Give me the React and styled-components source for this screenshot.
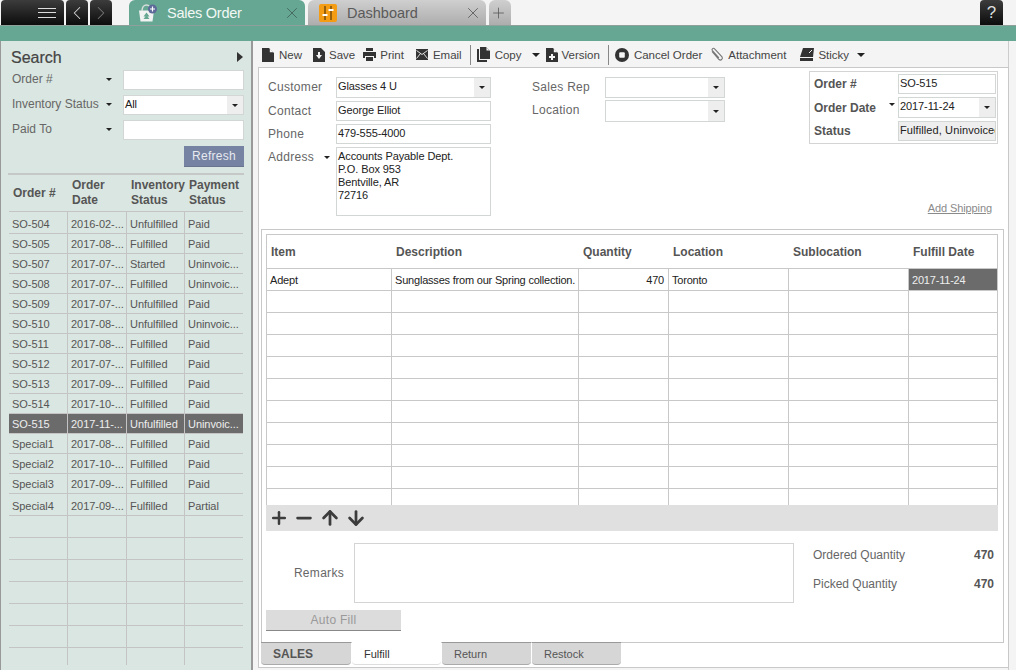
import React from 'react';
import styled, { createGlobalStyle } from 'styled-components';
import { Plus, Minus, ArrowUp, ArrowDown, ChevronLeft, ChevronRight, X } from 'lucide-react';

const GlobalStyle = createGlobalStyle`
  html, body {
    margin: 0;
    padding: 0;
    height: 670px;
    overflow: hidden;
    background: #f4f4f4;
    font-family: "Liberation Sans", Arial, sans-serif;
    color: #555;
  }
  * { box-sizing: border-box; }
`;

const orders = [
  ['SO-504', '2016-02-...', 'Unfulfilled', 'Paid'],
  ['SO-505', '2017-08-...', 'Fulfilled', 'Paid'],
  ['SO-507', '2017-07-...', 'Started', 'Uninvoic...'],
  ['SO-508', '2017-07-...', 'Fulfilled', 'Uninvoic...'],
  ['SO-509', '2017-07-...', 'Unfulfilled', 'Paid'],
  ['SO-510', '2017-08-...', 'Unfulfilled', 'Uninvoic...'],
  ['SO-511', '2017-08-...', 'Fulfilled', 'Paid'],
  ['SO-512', '2017-07-...', 'Fulfilled', 'Paid'],
  ['SO-513', '2017-09-...', 'Fulfilled', 'Paid'],
  ['SO-514', '2017-10-...', 'Fulfilled', 'Paid'],
  ['SO-515', '2017-11-...', 'Unfulfilled', 'Uninvoic...'],
  ['Special1', '2017-08-...', 'Fulfilled', 'Paid'],
  ['Special2', '2017-10-...', 'Fulfilled', 'Paid'],
  ['Special3', '2017-09-...', 'Fulfilled', 'Paid'],
  ['Special4', '2017-09-...', 'Fulfilled', 'Partial'],
];

const Page = styled.div`
  width: 1016px;
  height: 670px;
  display: flex;
  flex-direction: column;
`;

/* top tab strip */
const TopBar = styled.div`
  height: 25px;
  display: flex;
  align-items: flex-end;
  padding-left: 1px;
  background: #f4f4f4;
`;
const DarkBtn = styled.div`
  width: ${(p) => p.$w}px;
  height: 25px;
  margin-right: ${(p) => p.$mr || 2}px;
  border-radius: 4px 4px 0 0;
  background: linear-gradient(#3c3c3c, #0c0c0c);
  color: ${(p) => p.$dim ? '#777' : '#d8d8d8'};
  display: flex;
  align-items: center;
  justify-content: ${(p) => p.$end ? 'flex-end' : 'center'};
  padding-right: ${(p) => p.$end ? 8 : 0}px;
`;
const Burger = styled.span`
  width: 18px;
  height: 10px;
  border-top: 1px solid #ddd;
  border-bottom: 1px solid #ddd;
  position: relative;
  &::after {
    content: '';
    position: absolute;
    left: 0;
    right: 0;
    top: 3px;
    border-top: 1px solid #ddd;
  }
`;
const Tab = styled.div`
  width: ${(p) => p.$w}px;
  height: 25px;
  margin-right: 3px;
  border-radius: 6px 6px 0 0;
  display: flex;
  align-items: center;
  padding: 0 4px 0 ${(p) => p.$pl || 10}px;
  font-size: 14.5px;
  letter-spacing: ${(p) => p.$active ? '-0.25px' : '0'};
  background: ${(p) => p.$active ? '#65a792' : 'linear-gradient(#cfcfcf, #adadad)'};
  color: ${(p) => p.$active ? '#f2f8f5' : '#5a5a5a'};
`;
const TabTitle = styled.span`
  flex: 1;
  margin-left: ${(p) => p.$ml}px;
`;
const HelpBtn = styled.div`
  width: 23px;
  height: 25px;
  margin-left: auto;
  margin-right: 13px;
  border-radius: 4px 4px 0 0;
  background: linear-gradient(#3c3c3c, #0c0c0c);
  color: #ddd;
  font-size: 17px;
  text-align: center;
  line-height: 25px;
`;
const GreenBand = styled.div`
  height: 16px;
  background: #65a792;
  border-top: 1px solid #8f9f99;
`;

/* body */
const Body = styled.div`
  flex: 1;
  display: flex;
  min-height: 0;
`;
const Sidebar = styled.aside`
  width: 253px;
  background: #dae6e1;
  border-left: 1px solid #999;
  border-right: 2px solid #999;
  padding: 5px 7px 0 7px;
  display: flex;
  flex-direction: column;
`;
const SearchHead = styled.div`
  height: 24px;
  display: flex;
  justify-content: space-between;
  align-items: flex-start;
  padding: 3px 1px 0 3px;
  font-size: 16px;
  color: #444;
  -webkit-text-stroke: 0.2px #444;
  svg { margin-top: 3px; }
`;
const FilterRows = styled.div`
  display: grid;
  grid-template-columns: 115px 121px;
  grid-auto-rows: 20px;
  row-gap: 5px;
`;
const FilterLabel = styled.label`
  display: flex;
  justify-content: space-between;
  align-items: center;
  padding: 0 11px 2px 4px;
  font-size: 12px;
  color: #666;
`;
const Caret = styled.span`
  display: inline-block;
  width: 0;
  height: 0;
  border-left: ${(p) => p.$s || 3}px solid transparent;
  border-right: ${(p) => p.$s || 3}px solid transparent;
  border-top: ${(p) => p.$s || 3}px solid #222;
`;
const TextBox = styled.div`
  background: ${(p) => p.$grey ? '#eeeeee' : '#fff'};
  border: 1px solid #d2d6d4;
  font-size: 11px;
  letter-spacing: ${(p) => p.$grey ? '0.1px' : '-0.1px'};
  color: #222;
  padding: ${(p) => p.$pt || 1}px 1px 0 1px;
  white-space: ${(p) => p.$grey ? 'nowrap' : 'pre-line'};
  overflow: hidden;
  height: ${(p) => p.$h ? `${p.$h}px` : 'auto'};
  line-height: ${(p) => p.$lh || 14}px;
`;
const SelectBox = styled.div`
  background: #fff;
  border: 1px solid #d2d6d4;
  font-size: 11px;
  letter-spacing: -0.1px;
  color: #222;
  display: flex;
  height: ${(p) => p.$h ? `${p.$h}px` : 'auto'};
  line-height: 14px;
  padding-left: 1px;
  padding-top: 1px;
`;
const SelectValue = styled.span`
  flex: 1;
`;
const SelectArrow = styled.span`
  width: 16px;
  margin-top: -1px;
  background: #eeeeee;
  display: flex;
  align-items: center;
  justify-content: center;
`;
const RefreshRow = styled.div`
  display: flex;
  justify-content: flex-end;
  margin-top: 6px;
  height: 21px;
`;
const RefreshBtn = styled.button`
  width: 60px;
  border: 0;
  padding: 0;
  border-bottom: 1px solid #69758f;
  background: #7683a3;
  color: #e6e9f0;
  font: 12px "Liberation Sans", Arial, sans-serif;
  letter-spacing: 0.3px;
`;
const Divider = styled.div`
  height: 2px;
  margin-top: 6px;
  background: #c6c8c7;
`;
const OrderGrid = styled.div`
  display: grid;
  grid-template-columns: 59px 59px 58px 58px;
  margin-left: 1px;
`;
const OrderHead = styled.div`
  height: 37px;
  display: flex;
  align-items: center;
  padding-left: 4px;
  font-size: 12px;
  font-weight: bold;
  line-height: 15px;
  color: #555;
  border-bottom: 1px solid #c4c4c4;
`;
const OrderCell = styled.div`
  height: ${(p) => p.$h}px;
  padding-left: 3px;
  font-size: 11px;
  letter-spacing: -0.05px;
  line-height: ${(p) => p.$h === 22 ? 24 : 21}px;
  white-space: nowrap;
  overflow: hidden;
  background: ${(p) => p.$selected ? '#6b6b6b' : 'transparent'};
  color: ${(p) => p.$selected ? '#eee' : '#555'};
  border-bottom: ${(p) => p.$open ? 0 : 1}px solid #c4c4c4;
  border-right: 1px solid #c4c4c4;
  &:nth-child(4n) { border-right: 0; }
`;

/* right side */
const Main = styled.main`
  flex: 1;
  padding: 0 7px 0 5px;
  display: flex;
  flex-direction: column;
  min-width: 0;
`;
const PageEdge = styled.div`
  flex: 1;
  display: flex;
  flex-direction: column;
  border-right: 1px solid #ccc;
  padding-right: 5px;
  min-height: 0;
`;
const Toolbar = styled.div`
  height: 26px;
  display: flex;
  align-items: center;
  font-size: 11.5px;
  color: #444;
  padding: 1px 0 0 4px;
`;
const ToolItem = styled.span`
  display: inline-flex;
  align-items: center;
  gap: ${(p) => p.$gap || 5}px;
  margin-right: ${(p) => p.$mr}px;
  white-space: nowrap;
`;
const ToolSep = styled.span`
  width: 1px;
  height: 20px;
  background: #888;
  margin-right: 6px;
`;
const OuterPanel = styled.div`
  width: 751px;
  height: 601px;
  background: #fff;
  border: 1px solid #c8c8c8;
  display: flex;
  flex-direction: column;
`;
const FormArea = styled.div`
  height: 161px;
  flex-shrink: 0;
  display: flex;
  padding-left: 9px;
`;
const FieldGrid = styled.div`
  display: grid;
  grid-template-columns: ${(p) => p.$cols};
  grid-auto-rows: min-content;
  align-content: start;
  row-gap: ${(p) => p.$gap || 3}px;
  margin-top: 9px;
  margin-left: ${(p) => p.$ml || 0}px;
`;
const FieldLabel = styled.label`
  font-size: 12px;
  letter-spacing: 0.3px;
  color: #666;
  display: flex;
  justify-content: space-between;
  padding: 3px 6px 0 0;
  align-items: flex-start;
`;
const SideCaret = styled.span`
  margin-top: ${(p) => p.$mt || 5}px;
  line-height: 0;
`;
const SummaryColumn = styled.div`
  margin-left: 84px;
  width: 189px;
  display: flex;
  flex-direction: column;
`;
const SummaryBox = styled.div`
  margin-top: 3px;
  height: 73px;
  flex-shrink: 0;
  border: 1px solid #d4d4d4;
  padding: 2px 1px 0 4px;
  display: grid;
  grid-template-columns: 84px 98px;
  grid-template-rows: 20px 21px 20px;
  row-gap: 3px;
`;
const SummaryLabel = styled.label`
  font-size: 12px;
  font-weight: bold;
  color: #555;
  display: flex;
  justify-content: space-between;
  align-items: flex-start;
  padding: ${(p) => p.$pt || 3}px 3px 0 0;
`;
const ShippingLink = styled.a`
  align-self: flex-end;
  margin: 58px 6px 0 0;
  font-size: 11px;
  letter-spacing: -0.1px;
  color: #8a8a8a;
  text-decoration: underline;
`;
const InnerPanel = styled.div`
  width: 743px;
  height: 414px;
  flex-shrink: 0;
  margin-left: 2px;
  border: 1px solid #c8c8c8;
  padding: 4px 5px 0 4px;
`;
const LineGrid = styled.div`
  width: 732px;
  display: grid;
  grid-template-columns: 125px 187px 90px 120px 120px 88px;
  border: 1px solid #c8c8c8;
  border-bottom: 0;
`;
const LineHead = styled.div`
  height: 34px;
  display: flex;
  align-items: center;
  padding-left: 4px;
  font-size: 12px;
  font-weight: bold;
  color: #555;
  border-bottom: 1px solid #c8c8c8;
`;
const LineCell = styled.div`
  height: ${(p) => p.$short ? 16 : 22}px;
  padding: 0 4px 0 3px;
  font-size: 11px;
  line-height: 22px;
  letter-spacing: -0.2px;
  white-space: nowrap;
  overflow: hidden;
  text-align: ${(p) => p.$right ? 'right' : 'left'};
  background: ${(p) => p.$selected ? '#6b6b6b' : '#fff'};
  color: ${(p) => p.$selected ? '#eee' : '#222'};
  border-bottom: ${(p) => p.$short ? 0 : 1}px solid #c8c8c8;
  border-right: 1px solid #c8c8c8;
  &:nth-child(6n) { border-right: 0; }
`;
const RowTools = styled.div`
  width: 732px;
  height: 26px;
  background: #e0e0e0;
  color: #3c3c3c;
  display: flex;
  align-items: center;
  gap: 4px;
  padding-left: 3px;
`;
const LowerArea = styled.div`
  display: flex;
  margin-top: 12px;
  height: 60px;
`;
const RemarksLabel = styled.label`
  width: 78px;
  font-size: 12px;
  letter-spacing: 0.3px;
  color: #666;
  text-align: right;
  margin-right: 10px;
  align-self: center;
  flex-shrink: 0;
`;
const RemarksBox = styled.div`
  width: 440px;
  height: 60px;
  border: 1px solid #d4d4d4;
`;
const Totals = styled.div`
  flex: 1;
  margin-top: -3px;
  padding: 0 4px 0 19px;
  display: grid;
  grid-auto-rows: 29px;
  align-content: start;
`;
const TotalRow = styled.div`
  display: flex;
  justify-content: space-between;
  align-items: center;
  font-size: 12px;
  color: #666;
  b { color: #555; }
`;
const AutoFill = styled.button`
  display: block;
  width: 135px;
  height: 21px;
  margin-top: 7px;
  border: 0;
  padding: 0;
  border-bottom: 1px solid #888;
  background: #dcdcdc;
  color: #999;
  font: 12px "Liberation Sans", Arial, sans-serif;
  letter-spacing: 0.3px;
`;
const BottomTabs = styled.div`
  display: flex;
  margin: -1px 0 0 2px;
  gap: 1px;
`;
const BottomTab = styled.div`
  width: ${(p) => p.$w || 89}px;
  height: 23px;
  border-radius: 0 0 4px 4px;
  border-top: ${(p) => p.$active ? 0 : 1}px solid #999;
  border-bottom: 1px solid ${(p) => p.$active ? '#ddd' : '#aaa'};
  background: ${(p) => p.$active ? '#fff' : '#d6d6d6'};
  font-size: ${(p) => p.$bold ? 12 : 11}px;
  font-weight: ${(p) => p.$bold ? 'bold' : 'normal'};
  line-height: 20px;
  padding: ${(p) => p.$active ? 2 : 1}px 0 0 12px;
  color: ${(p) => p.$active ? '#333' : '#555'};
`;

const Doc = () => (
  <svg width="12" height="14" viewBox="0 0 12 14">
    <path d="M0 0h7l5 5v9H0z" fill="#333" />
    <path d="M7.8 0.4 11.6 4.2H7.8z" fill="#f4f4f4" />
  </svg>
);
const SaveIcon = () => (
  <svg width="12" height="14" viewBox="0 0 12 14">
    <path d="M0 0h8l4 4v10H0z" fill="#333" />
    <path d="M5 4h2v3h2l-3 4-3-4h2z" fill="#f4f4f4" />
  </svg>
);
const PrintIcon = () => (
  <svg width="13" height="13" viewBox="0 0 13 13">
    <path d="M3 0h7v3H3z" fill="#333" />
    <path d="M0 4h13v6h-2V8H2v2H0z" fill="#333" />
    <path d="M3 9h7v4H3z" fill="#333" />
  </svg>
);
const MailIcon = () => (
  <svg width="12" height="11" viewBox="0 0 12 11">
    <rect width="12" height="11" fill="#333" />
    <path d="M0.5 1.5 6 5.5l5.5-4M0.5 9.5 4.5 4.5M11.5 9.5 7.5 4.5" stroke="#f4f4f4" strokeWidth="0.9" fill="none" />
  </svg>
);
const CopyIcon = () => (
  <svg width="13" height="15" viewBox="0 0 13 15">
    <path d="M0 2h2v11h8v2H0z" fill="#333" />
    <path d="M3 0h6l4 4v8H3z" fill="#333" />
    <path d="M9.5 0.6 12.4 3.6H9.5z" fill="#f4f4f4" />
  </svg>
);
const VersionIcon = () => (
  <svg width="12" height="14" viewBox="0 0 12 14">
    <path d="M0 0h7l5 5v9H0z" fill="#333" />
    <path d="M7.8 0.4 11.6 4.2H7.8z" fill="#f4f4f4" />
    <path d="M5 6h2v2h2v2H7v2H5v-2H3V8h2z" fill="#f4f4f4" />
  </svg>
);
const CancelIcon = () => (
  <svg width="14" height="14" viewBox="0 0 14 14">
    <circle cx="7" cy="7" r="7" fill="#333" />
    <rect x="4.2" y="4.2" width="5.6" height="5.6" rx="1" fill="#f4f4f4" />
  </svg>
);
const ClipIcon = () => (
  <svg width="14" height="15" viewBox="0 0 14 15">
    <path d="M2 4.5 9 12.5a2 2 0 0 0 3-2.6L4.6 1.8a1.4 1.4 0 0 0-2.2 1.8l6.5 7.2" stroke="#777" strokeWidth="1.1" fill="none" />
  </svg>
);
const StickyIcon = () => (
  <svg width="14" height="13" viewBox="0 0 14 13">
    <path d="M3 0h11l-1 9H0z" fill="#333" />
    <path d="M0 10h13v3H0z" fill="#333" />
    <path d="M9 5l3-3" stroke="#f4f4f4" strokeWidth="1" />
  </svg>
);
const BasketIcon = () => (
  <svg width="22" height="22" viewBox="0 0 22 22">
    <path d="M3 8.5h15l-1.5 11h-12z" fill="#f0f3f1" />
    <path d="M6 9c0-8 9-8 9 0" stroke="#d8dedb" strokeWidth="1.6" fill="none" />
    <path d="M10.5 10.5l3 4h-2l2 2.5h-6l2-2.5h-2z" fill="#65a792" />
    <circle cx="16.5" cy="7" r="4.5" fill="#5d6a99" />
    <path d="M16.5 4.5v5M14 7h5" stroke="#fff" strokeWidth="1.2" />
  </svg>
);
const SlidersIcon = () => (
  <svg width="18" height="18" viewBox="0 0 18 18">
    <rect width="18" height="18" rx="2" fill="#f59c15" />
    <path d="M6 2v14M12 2v14" stroke="#5c3a08" strokeWidth="1.2" />
    <rect x="3.5" y="10" width="5" height="2" fill="#fff" />
    <rect x="9.5" y="5" width="5" height="2" fill="#fff" />
  </svg>
);

const Select = ({ value, h }) => (
  <SelectBox $h={h}>
    <SelectValue>{value}</SelectValue>
    <SelectArrow><Caret /></SelectArrow>
  </SelectBox>
);

const SearchPanel = () => (
  <Sidebar>
    <SearchHead>
      <span>Search</span>
      <svg width="6" height="10" viewBox="0 0 6 10"><path d="M0 0l6 5-6 5z" fill="#333" /></svg>
    </SearchHead>
    <FilterRows>
      <FilterLabel>Order # <Caret /></FilterLabel>
      <TextBox />
      <FilterLabel>Inventory Status <Caret /></FilterLabel>
      <Select value="All" />
      <FilterLabel>Paid To <Caret /></FilterLabel>
      <TextBox />
    </FilterRows>
    <RefreshRow><RefreshBtn>Refresh</RefreshBtn></RefreshRow>
    <Divider />
    <OrderGrid>
      <OrderHead>Order #</OrderHead>
      <OrderHead>Order<br />Date</OrderHead>
      <OrderHead>Inventory<br />Status</OrderHead>
      <OrderHead>Payment<br />Status</OrderHead>
    </OrderGrid>
    <OrderGrid>
      {orders.map((row, i) =>
        row.map((text, j) => (
          <OrderCell
            key={`${i}-${j}`}
            $selected={row[0] === 'SO-515'}
            $h={i === 0 || i === orders.length - 1 ? 22 : 20}
          >
            {text}
          </OrderCell>
        ))
      )}
      {Array.from({ length: 28 }, (_, i) => (
        <OrderCell key={i} $h={i >= 24 ? 17 : 22} $open={i >= 24} />
      ))}
    </OrderGrid>
  </Sidebar>
);

const lineCols = 6;
const emptyLines = Array.from({ length: 10 * lineCols }, (x, i) => i);

const SalesOrder = () => (
  <Main>
    <PageEdge>
      <Toolbar>
        <ToolItem $mr={11}><Doc />New</ToolItem>
        <ToolItem $mr={8} $gap={4}><SaveIcon />Save</ToolItem>
        <ToolItem $mr={12} $gap={4}><PrintIcon />Print</ToolItem>
        <ToolItem $mr={8}><MailIcon />Email</ToolItem>
        <ToolSep />
        <ToolItem $mr={10}><CopyIcon />Copy</ToolItem>
        <ToolItem $mr={6}><Caret $s={4} /></ToolItem>
        <ToolItem $mr={8} $gap={4}><VersionIcon />Version</ToolItem>
        <ToolSep />
        <ToolItem $mr={8}><CancelIcon />Cancel Order</ToolItem>
        <ToolItem $mr={14} $gap={4}><ClipIcon />Attachment</ToolItem>
        <ToolItem $mr={8} $gap={4}><StickyIcon />Sticky</ToolItem>
        <Caret $s={4} />
      </Toolbar>
      <OuterPanel>
        <FormArea>
          <FieldGrid $cols="68px 155px">
            <FieldLabel>Customer</FieldLabel>
            <Select value="Glasses 4 U" h={21} />
            <FieldLabel>Contact</FieldLabel>
            <TextBox $h={20}>George Elliot</TextBox>
            <FieldLabel>Phone</FieldLabel>
            <TextBox $h={20}>479-555-4000</TextBox>
            <FieldLabel>Address <SideCaret><Caret /></SideCaret></FieldLabel>
            <TextBox $h={69} $lh={13} $pt={2}>{'Accounts Payable Dept.\nP.O. Box 953\nBentville, AR\n72716'}</TextBox>
          </FieldGrid>
          <FieldGrid $cols="73px 120px" $ml={41} $gap={2}>
            <FieldLabel>Sales Rep</FieldLabel>
            <Select value="" h={21} />
            <FieldLabel>Location</FieldLabel>
            <Select value="" h={22} />
          </FieldGrid>
          <SummaryColumn>
            <SummaryBox>
              <SummaryLabel>Order #</SummaryLabel>
              <TextBox>SO-515</TextBox>
              <SummaryLabel $pt={4}>Order Date <SideCaret $mt={1}><Caret /></SideCaret></SummaryLabel>
              <Select value="2017-11-24" />
              <SummaryLabel>Status</SummaryLabel>
              <TextBox $grey>Fulfilled, Uninvoiced</TextBox>
            </SummaryBox>
            <ShippingLink>Add Shipping</ShippingLink>
          </SummaryColumn>
        </FormArea>
        <InnerPanel>
          <LineGrid>
            <LineHead>Item</LineHead>
            <LineHead>Description</LineHead>
            <LineHead>Quantity</LineHead>
            <LineHead>Location</LineHead>
            <LineHead>Sublocation</LineHead>
            <LineHead>Fulfill Date</LineHead>
            <LineCell>Adept</LineCell>
            <LineCell>Sunglasses from our Spring collection.</LineCell>
            <LineCell $right>470</LineCell>
            <LineCell>Toronto</LineCell>
            <LineCell />
            <LineCell $selected>2017-11-24</LineCell>
            {emptyLines.map((i) => (
              <LineCell key={i} $short={i >= 9 * lineCols} />
            ))}
          </LineGrid>
          <RowTools>
            <Plus size={20} strokeWidth={3} />
            <Minus size={22} strokeWidth={3} />
            <ArrowUp size={22} strokeWidth={3} />
            <ArrowDown size={22} strokeWidth={3} />
          </RowTools>
          <LowerArea>
            <RemarksLabel>Remarks</RemarksLabel>
            <RemarksBox />
            <Totals>
              <TotalRow>Ordered Quantity <b>470</b></TotalRow>
              <TotalRow>Picked Quantity <b>470</b></TotalRow>
            </Totals>
          </LowerArea>
          <AutoFill>Auto Fill</AutoFill>
        </InnerPanel>
        <BottomTabs>
          <BottomTab $bold $w={90}>SALES</BottomTab>
          <BottomTab $active>Fulfill</BottomTab>
          <BottomTab>Return</BottomTab>
          <BottomTab>Restock</BottomTab>
        </BottomTabs>
      </OuterPanel>
    </PageEdge>
  </Main>
);

export default function App() {
  return (
    <Page>
      <GlobalStyle />
      <TopBar>
        <DarkBtn $w={63} $end><Burger /></DarkBtn>
        <DarkBtn $w={22}><ChevronLeft size={22} strokeWidth={1.1} /></DarkBtn>
        <DarkBtn $w={22} $mr={17} $dim><ChevronRight size={22} strokeWidth={1.1} /></DarkBtn>
        <Tab $w={176} $active $pl={7}>
          <BasketIcon />
          <TabTitle $ml={9}>Sales Order</TabTitle>
          <X size={18} strokeWidth={1.1} color="#3f5f54" />
        </Tab>
        <Tab $w={178} $pl={11}>
          <SlidersIcon />
          <TabTitle $ml={10}>Dashboard</TabTitle>
          <X size={18} strokeWidth={1.1} color="#555" />
        </Tab>
        <Tab $w={22} $pl={1}><Plus size={20} strokeWidth={1.1} color="#555" /></Tab>
        <HelpBtn>?</HelpBtn>
      </TopBar>
      <GreenBand />
      <Body>
        <SearchPanel />
        <SalesOrder />
      </Body>
    </Page>
  );
}
